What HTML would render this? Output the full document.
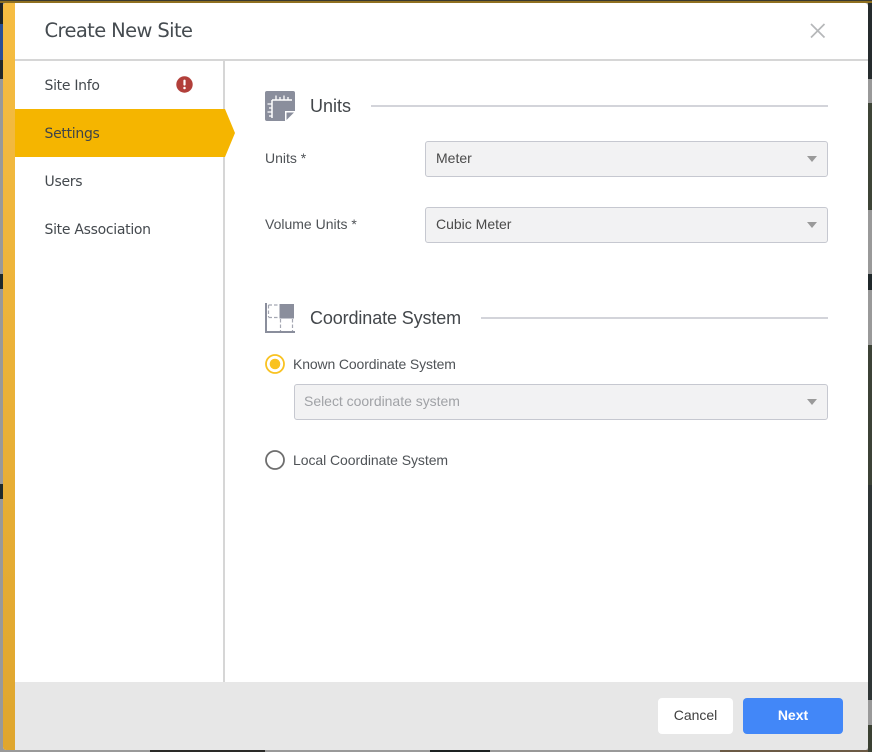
<!DOCTYPE html>
<html><head><meta charset="utf-8"><style>
*{box-sizing:border-box;margin:0;padding:0}
html,body{width:872px;height:752px;overflow:hidden;background:#999;font-family:"Liberation Sans",sans-serif}
.a{position:absolute}
.h{font-family:"DejaVu Sans",sans-serif;color:#454b50}
.nav{left:44px;font-size:14px;line-height:20px;font-family:"DejaVu Sans",sans-serif;color:#44494e;letter-spacing:-.3px}
.sel{left:425px;width:403px;height:36px;background:#f2f2f3;border:1px solid #c6c8d0;border-radius:3px;font-size:14px;line-height:33px;padding-left:10px;color:#4a4a4a}
.sel:after{content:"";position:absolute;right:10px;top:14px;border:5.5px solid transparent;border-top:6px solid #9a9a9a;border-bottom:0}
.lab{font-size:14px;line-height:20px;color:#4f5357}
.sec{font-size:18px;line-height:24px;color:#43474b;left:310px}
.ln{height:2px;background:#d3d4da;right:44px}
</style></head><body>
<div class="a" style="left:0;top:0;width:872px;height:1px;background:#3a3a30"></div>
<div class="a" style="left:0;top:1px;width:872px;height:2px;background:#8f7020"></div>
<div class="a" style="left:0;top:3px;width:3px;height:21px;background:#1f2426"></div>
<div class="a" style="left:0;top:24px;width:3px;height:36px;background:#2a4f96"></div>
<div class="a" style="left:0;top:60px;width:3px;height:19px;background:#22282a"></div>
<div class="a" style="left:0;top:274px;width:3px;height:15px;background:#1f2a2c"></div>
<div class="a" style="left:0;top:484px;width:3px;height:15px;background:#1f2a2c"></div>
<div class="a" style="left:868px;top:3px;width:4px;height:76px;background:#252b2d"></div>
<div class="a" style="left:868px;top:103px;width:4px;height:107px;background:#3e4437"></div>
<div class="a" style="left:868px;top:274px;width:4px;height:16px;background:#20282a"></div>
<div class="a" style="left:868px;top:345px;width:4px;height:140px;background:#3c4236"></div>
<div class="a" style="left:868px;top:485px;width:4px;height:215px;background:#2f3535"></div>
<div class="a" style="left:868px;top:725px;width:4px;height:27px;background:#3a4032"></div>
<div class="a" style="left:150px;top:750px;width:115px;height:2px;background:#2a2a28"></div>
<div class="a" style="left:430px;top:750px;width:60px;height:2px;background:#1c2222"></div>
<div class="a" style="left:720px;top:750px;width:148px;height:2px;background:#6b5a45"></div>

<div class="a" style="left:3px;top:3px;width:865px;height:747px;background:#fff;border-radius:3px;overflow:hidden">
<div class="a" style="left:0;top:0;width:12px;height:747px;background:linear-gradient(#f6bd42,#dfa62e)"></div>
</div>
<div class="a" style="left:15px;top:59px;width:853px;height:2px;background:#d6d6d6"></div>
<div class="a" style="left:223px;top:61px;width:2px;height:621px;background:#d6d6d6"></div>
<div class="a h" style="left:44.500px;top:18px;font-size:19.5px;line-height:26px;letter-spacing:-.62px">Create New Site</div>
<svg class="a" style="left:809px;top:22px" width="18" height="18" viewBox="0 0 18 18"><path d="M2 2L15.500 15.500M15.500 2L2 15.500" stroke="#b5b7b9" stroke-width="1.700" fill="none"/></svg>

<div class="a nav" style="top:76px;left:44.500px">Site Info</div>
<svg class="a" style="left:176px;top:76px" width="17" height="17"><circle cx="8.500" cy="8.500" r="8.200" fill="#b23f3a"/><rect x="7.400" y="3.600" width="2.200" height="6" rx="1" fill="#fff"/><circle cx="8.500" cy="12" r="1.250" fill="#fff"/></svg>
<svg class="a" style="left:15px;top:109px" width="220" height="48"><path d="M0 0H210L220 24L210 48H0Z" fill="#f5b500"/></svg>
<div class="a nav" style="top:124px;left:44.500px;color:#3f4448">Settings</div>
<div class="a nav" style="top:172px;left:44.500px">Users</div>
<div class="a nav" style="top:220px;left:44.500px">Site Association</div>

<svg class="a" style="left:265px;top:91px" width="30" height="30" viewBox="0 0 30 30"><path d="M2 0H28a2 2 0 0 1 2 2V20L20 30H2a2 2 0 0 1-2-2V2a2 2 0 0 1 2-2Z" fill="#8a8e9c"/><path d="M7 9H27M7 9V27" stroke="#fff" stroke-width="1.500" fill="none"/><path d="M11 9V4.500M15 9V6M19 9V4.500M23 9V6M7 13H2.500M7 17H4M7 21H2.500M7 25H4" stroke="#fff" stroke-width="1.300"/><path d="M20 20H30V30H20Z" fill="#fff"/><path d="M21.500 21.500H29L21.500 29Z" fill="#8a8e9c"/></svg>
<div class="a sec" style="top:94px">Units</div>
<div class="a ln" style="left:371px;top:105px"></div>
<div class="a lab" style="left:265px;top:148px">Units *</div>
<div class="a sel" style="top:141px">Meter</div>
<div class="a lab" style="left:265px;top:214px">Volume Units *</div>
<div class="a sel" style="top:207px">Cubic Meter</div>

<svg class="a" style="left:265px;top:303px" width="30" height="30" viewBox="0 0 30 30"><rect x="14.500" y="1" width="14.500" height="14.500" fill="#8a8e9c"/><path d="M1 0V29H30" stroke="#8a8e9c" stroke-width="2" fill="none"/><path d="M3.500 2H14M3.500 14.500H14M3.500 2V14M15.500 16V28M27.500 16V28" stroke="#a4a7b2" stroke-width="1.200" stroke-dasharray="3.500 2" fill="none"/></svg>
<div class="a sec" style="top:306px;letter-spacing:-.12px">Coordinate System</div>
<div class="a ln" style="left:481px;top:317px"></div>

<svg class="a" style="left:265px;top:354px" width="20" height="20"><circle cx="10" cy="10" r="9" fill="none" stroke="#f9c221" stroke-width="1.800"/><circle cx="10" cy="10" r="5.300" fill="#f9c221"/></svg>
<div class="a lab" style="left:293px;top:354px;letter-spacing:-.13px">Known Coordinate System</div>
<div class="sel a" style="left:294px;width:534px;top:384px;color:#a0a2a6;padding-left:9px;letter-spacing:-.02px">Select coordinate system</div>
<svg class="a" style="left:265px;top:450px" width="20" height="20"><circle cx="10" cy="10" r="9" fill="none" stroke="#6e6e6e" stroke-width="1.800"/></svg>
<div class="a lab" style="left:293px;top:450px;letter-spacing:-.06px">Local Coordinate System</div>

<div class="a" style="left:15px;top:682px;width:853px;height:68px;background:#e7e7e7;border-radius:0 0 3px 0"></div>
<div class="a" style="left:658px;top:698px;width:75px;height:36px;background:#fff;border-radius:4px;text-align:center;font-size:14px;line-height:35px;color:#404040">Cancel</div>
<div class="a" style="left:743px;top:698px;width:100px;height:36px;background:#4287f8;border-radius:4px;text-align:center;font-size:14px;font-weight:bold;line-height:35px;color:#fff">Next</div>
</body></html>
